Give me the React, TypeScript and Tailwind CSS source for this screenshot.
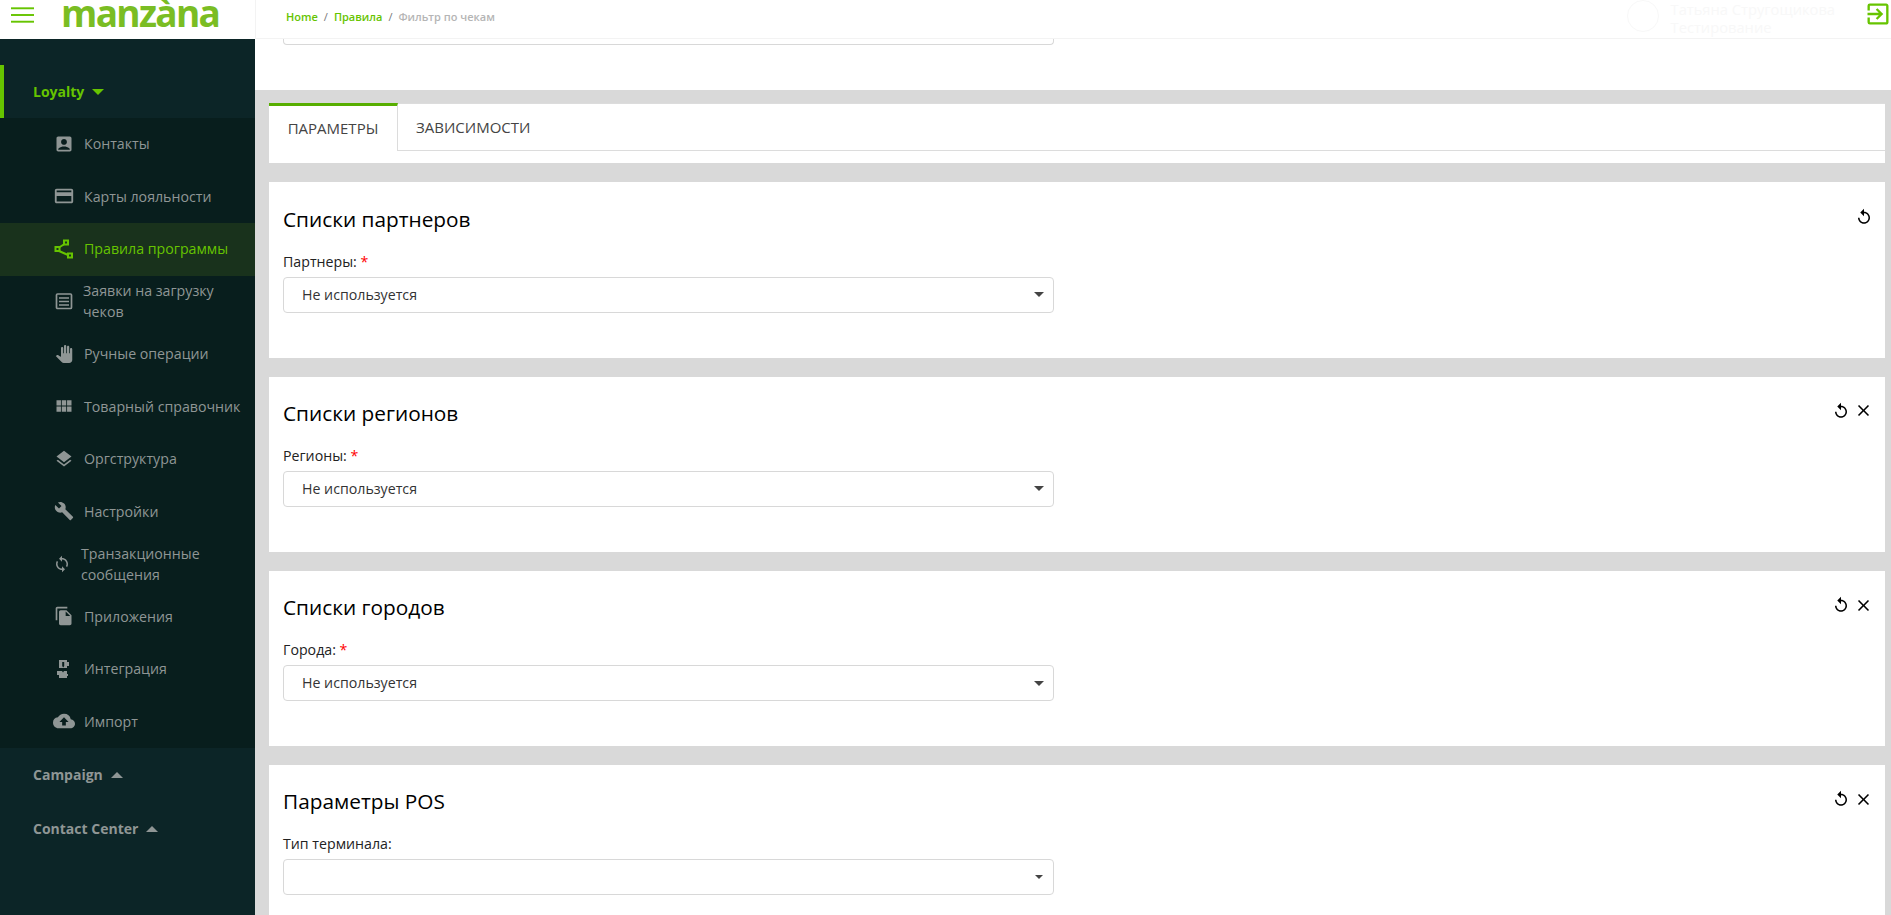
import {
  MdAccountBox,
  MdBuild,
  MdClose,
  MdCloudUpload,
  MdCreditCard,
  MdExitToApp,
  MdFileCopy,
  MdLayers,
  MdPanTool,
  MdReplay,
  MdSync,
  MdViewModule,
} from 'react-icons/md'
import type { ReactNode } from 'react'

const font = "font-['Open_Sans','Noto_Sans',sans-serif]"

function BurgerIcon({ className }: { className?: string }) {
  return (
    <svg viewBox="0 0 24 16" className={className} fill="currentColor">
      <rect x="0" y="0" width="24" height="2" />
      <rect x="0" y="7" width="24" height="2" />
      <rect x="0" y="14" width="24" height="2" />
    </svg>
  )
}

function RulesIcon({ className }: { className?: string }) {
  return (
    <svg viewBox="0 0 20 20" className={className} fill="none" stroke="currentColor" strokeWidth="2">
      <rect x="10" y="1.5" width="4" height="4" />
      <rect x="1.5" y="8" width="4" height="4" />
      <rect x="14" y="14.5" width="4" height="4" />
      <path d="M10.5 5 5 8.5M5 12l9 4" />
    </svg>
  )
}

function ReceiptIcon({ className }: { className?: string }) {
  return (
    <svg viewBox="0 0 20 20" className={className} fill="none" stroke="currentColor" strokeWidth="1.7">
      <rect x="2.5" y="3" width="15" height="14.5" rx="1" />
      <path d="M5 7h10M5 10.5h10M5 14h10" />
    </svg>
  )
}

function IntegrationIcon({ className }: { className?: string }) {
  return (
    <svg viewBox="0 0 20 20" className={className} fill="currentColor">
      <path d="M5 1h8v2h2v4h-2v2H5zM8.2 3v4l1 1.4L10.2 7V3z" fillRule="evenodd" />
      <path d="M3 12h5l1 1.5 1-1.5h3v3h1v2h-1v2H5v-3H3z" />
    </svg>
  )
}

interface MenuItem {
  label: string
  icon: ReactNode
  active?: boolean
  textClass?: string
}

const iconClass = 'w-[20px] h-[20px]'

const menu: MenuItem[] = [
  { label: 'Контакты', icon: <MdAccountBox className={iconClass} /> },
  { label: 'Карты лояльности', icon: <MdCreditCard className="w-[22px] h-[22px]" /> },
  { label: 'Правила программы', icon: <RulesIcon className={iconClass} />, active: true },
  { label: 'Заявки на загрузку чеков', icon: <ReceiptIcon className={iconClass} />, textClass: '-ml-[1px] w-[150px]' },
  { label: 'Ручные операции', icon: <MdPanTool className="w-[18px] h-[18px]" /> },
  { label: 'Товарный справочник', icon: <MdViewModule className={iconClass} /> },
  { label: 'Оргструктура', icon: <MdLayers className={iconClass} /> },
  { label: 'Настройки', icon: <MdBuild className={iconClass} /> },
  {
    label: 'Транзакционные сообщения',
    icon: <MdSync className="w-[18px] h-[18px] -ml-[4px]" />,
    textClass: '-ml-[3px] w-[150px]',
  },
  { label: 'Приложения', icon: <MdFileCopy className={iconClass} /> },
  { label: 'Интеграция', icon: <IntegrationIcon className={iconClass} /> },
  { label: 'Импорт', icon: <MdCloudUpload className="w-[22px] h-[22px]" /> },
]

function Sidebar() {
  return (
    <aside className="w-[255px] shrink-0 flex flex-col bg-[#0c2527]">
      <div className="h-[26px]" />
      <div className="h-[53px] border-l-4 border-[#66c400] pl-[29px] flex items-center gap-[8px]">
        <span className="text-[14px] font-bold text-[#66c400]">Loyalty</span>
        <span className="w-0 h-0 border-x-[6px] border-x-transparent border-t-[6px] border-t-[#66c400]" />
      </div>
      <div className="bg-[#081e1d]">
        {menu.map((item) => (
          <div
            key={item.label}
            className={`h-[52.5px] flex items-center pb-[1px] ${item.active ? 'bg-[#19321c] text-[#66c400]' : 'text-[#8f9695]'}`}
          >
            <div className="ml-[52px] mr-[8px] w-[24px] shrink-0 flex justify-center">{item.icon}</div>
            <span className={`text-[14.2px] leading-[21px] ${item.textClass ?? ''}`}>{item.label}</span>
          </div>
        ))}
      </div>
      <div className="h-[53px] pl-[33px] flex items-center gap-[8px]">
        <span className="text-[14px] font-bold text-[#8f9695]">Campaign</span>
        <span className="w-0 h-0 border-x-[6px] border-x-transparent border-b-[6px] border-b-[#8f9695]" />
      </div>
      <div className="h-[55px] pl-[33px] flex items-center gap-[8px]">
        <span className="text-[14px] font-bold text-[#8f9695]">Contact Center</span>
        <span className="w-0 h-0 border-x-[6px] border-x-transparent border-b-[6px] border-b-[#8f9695]" />
      </div>
    </aside>
  )
}

function Select({ value, small }: { value?: string; small?: boolean }) {
  return (
    <div className="h-[36px] w-[771px] rounded-[4px] border border-[#d8d8d8] flex items-center justify-between pl-[18px] pr-[9px]">
      <span className="text-[14.2px] text-[#333]">{value}</span>
      {small ? (
        <span className="w-0 h-0 mr-[1px] border-x-[4px] border-x-transparent border-t-[4px] border-t-[#444]" />
      ) : (
        <span className="w-0 h-0 border-x-[5px] border-x-transparent border-t-[5px] border-t-[#444]" />
      )}
    </div>
  )
}

function Section({
  title,
  label,
  required,
  value,
  closable,
  small,
}: {
  title: string
  label: string
  required?: boolean
  value?: string
  closable?: boolean
  small?: boolean
}) {
  return (
    <section className="bg-white h-[175.3px] pl-[14px] pr-[12px] pt-[22.15px] shrink-0">
      <div className="flex items-center justify-between h-[28px]">
        <h2 className="text-[20.8px] leading-[28px] text-black">{title}</h2>
        <div className="flex items-center gap-[4px] text-black -mt-[4px]">
          <MdReplay className="w-[18px] h-[18px]" />
          {closable && <MdClose className="w-[19px] h-[19px]" />}
        </div>
      </div>
      <div className="mt-[19px] text-[14.2px] leading-[20px] text-[#222]">
        {label} {required && <span className="text-[#f00]">*</span>}
      </div>
      <div className="mt-[5px]">
        <Select value={value} small={small} />
      </div>
    </section>
  )
}

export default function App() {
  return (
    <div className={`${font} w-[1891px] h-[915px] overflow-hidden flex flex-col bg-white`}>
      <header className="h-[39px] shrink-0 flex bg-white">
        <div className="w-[255px] shrink-0 flex items-center overflow-hidden">
          <BurgerIcon className="ml-[11px] -mt-[9px] w-[23px] h-[16px] text-[#66c400]" />
          <span className="ml-[27px] -mt-[14px] text-[37px] leading-[38px] font-bold tracking-[-1.7px] text-[#7abd23]">
            manzàna
          </span>
        </div>
        <div className="flex-1 flex items-center justify-between border-l border-b border-[#f3f3f3] pl-[30px]">
          <div className="flex items-center text-[11px] gap-[6px] font-semibold pb-[4px]">
            <span className="text-[#66c400]">Home</span>
            <span className="text-[#777] font-normal">/</span>
            <span className="text-[#66c400]">Правила</span>
            <span className="text-[#777] font-normal">/</span>
            <span className="text-[#b5b5b5]">Фильтр по чекам</span>
          </div>
          <div className="flex items-start self-start">
            <div className="w-[32px] h-[32px] rounded-full border border-[#f8f8f8]" />
            <div className="ml-[12px] mr-[29px] text-[14.7px] leading-[18px] text-[#f8f8f8]">
              <div>Татьяна Стругощикова</div>
              <div>Тестирование</div>
            </div>
            <MdExitToApp className="-mr-px w-[28px] h-[28px] text-[#66c400]" />
          </div>
        </div>
      </header>

      <div className="flex-1 flex min-h-0">
        <Sidebar />
        <main className="flex-1 min-w-0 flex flex-col bg-[#d9d9d9]">
          <div className="bg-white h-[51px] shrink-0 pl-[28px]">
            <div className="w-[771px] h-[6px] rounded-b-[4px] border-x border-b border-[#d8d8d8]" />
          </div>
          <div className="pl-[14px] pr-[6px] pt-[13px] flex flex-col gap-[19px]">
            <div className="bg-white h-[60.4px] shrink-0 flex items-start">
              <div className="h-[48px] w-[129px] border-t-[3px] border-t-[#57ae00] border-r border-r-[#dcdcdc] flex items-center justify-center text-[15px] text-[#444]">
                ПАРАМЕТРЫ
              </div>
              <div className="flex-1 h-[48px] border-t border-b border-[#dcdcdc] flex items-center pl-[18px] text-[15px] text-[#444]">
                ЗАВИСИМОСТИ
              </div>
            </div>
            <Section title="Списки партнеров" label="Партнеры:" required value="Не используется" />
            <Section title="Списки регионов" label="Регионы:" required value="Не используется" closable />
            <Section title="Списки городов" label="Города:" required value="Не используется" closable />
            <Section title="Параметры POS" label="Тип терминала:" closable small />
          </div>
        </main>
      </div>
    </div>
  )
}
